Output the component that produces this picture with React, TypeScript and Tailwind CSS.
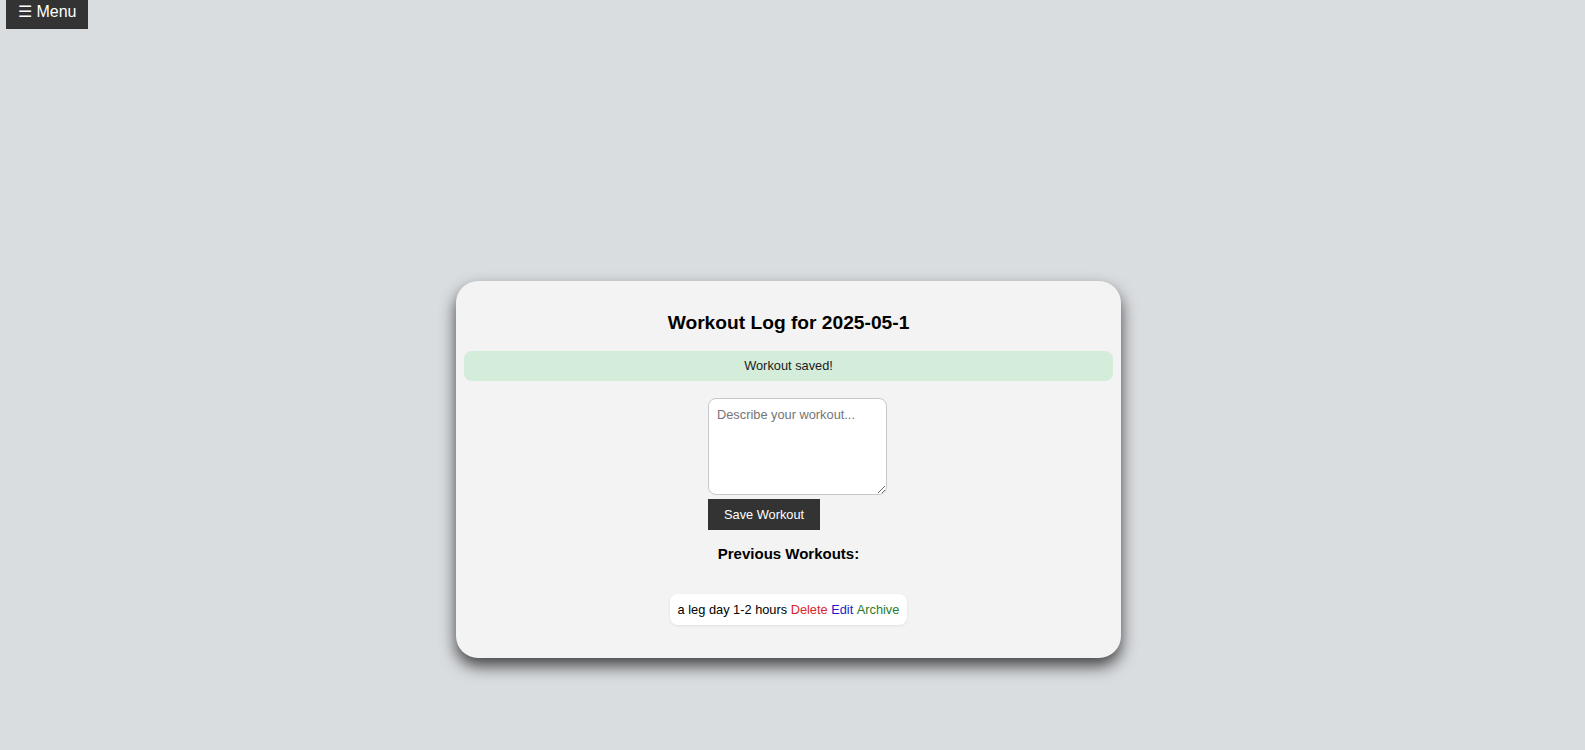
import React from "react";

export default function App() {
  return (
    <div
      className="min-h-[750px] w-full bg-[#dadde0] text-black"
      style={{ fontFamily: '"Liberation Sans", Arial, sans-serif' }}
    >
      <div className="flex">
        <button className="ml-[6px] flex h-[29px] items-start bg-[#333333] px-[12px] pt-[1px] text-[16px] leading-[22px] text-white">
          ☰ Menu
        </button>
      </div>
      <div className="ml-[456px] mt-[252px] w-[665px] rounded-[22px] bg-[#f3f3f3] px-[8px] pt-[31px] pb-[33px] text-[12.8px] shadow-[0_8px_16px_rgba(0,0,0,0.7)]">
        <h2 className="text-center text-[19.2px] font-bold leading-[22px]">
          Workout Log for 2025-05-1
        </h2>
        <div className="mt-[17px] flex h-[30px] items-center justify-center rounded-[8px] bg-[#d4edda] text-[12.8px] text-[#1b1b1b]">
          Workout saved!
        </div>
        <div className="mt-[17px] flex flex-col items-start pl-[244px]">
          <textarea
            className="block h-[97px] w-[179px] resize-y rounded-[8px] border border-[#c8c8c8] bg-white p-[8px] text-[12.8px] leading-[15px] placeholder:text-[#757575] outline-none"
            placeholder="Describe your workout..."
          />
          <button className="mt-[4px] h-[31px] bg-[#333333] px-[16px] text-[12.8px] leading-[15px] text-white">
            Save Workout
          </button>
        </div>
        <h3 className="mt-[15px] text-center text-[15px] font-bold leading-[17px]">
          Previous Workouts:
        </h3>
        <div className="mt-[32px] flex justify-center">
          <div className="flex h-[31px] items-center rounded-[8px] bg-white px-[8px] text-[12.8px] shadow-[0_1px_3px_rgba(0,0,0,0.08)]">
            <span>a leg day 1-2 hours</span>
            <span className="ml-[3.5px] text-[#d9262b]">Delete</span>
            <span className="ml-[3.5px] text-[#1c1cc8]">Edit</span>
            <span className="ml-[3.5px] text-[#2a7a2a]">Archive</span>
          </div>
        </div>
      </div>
    </div>
  );
}
